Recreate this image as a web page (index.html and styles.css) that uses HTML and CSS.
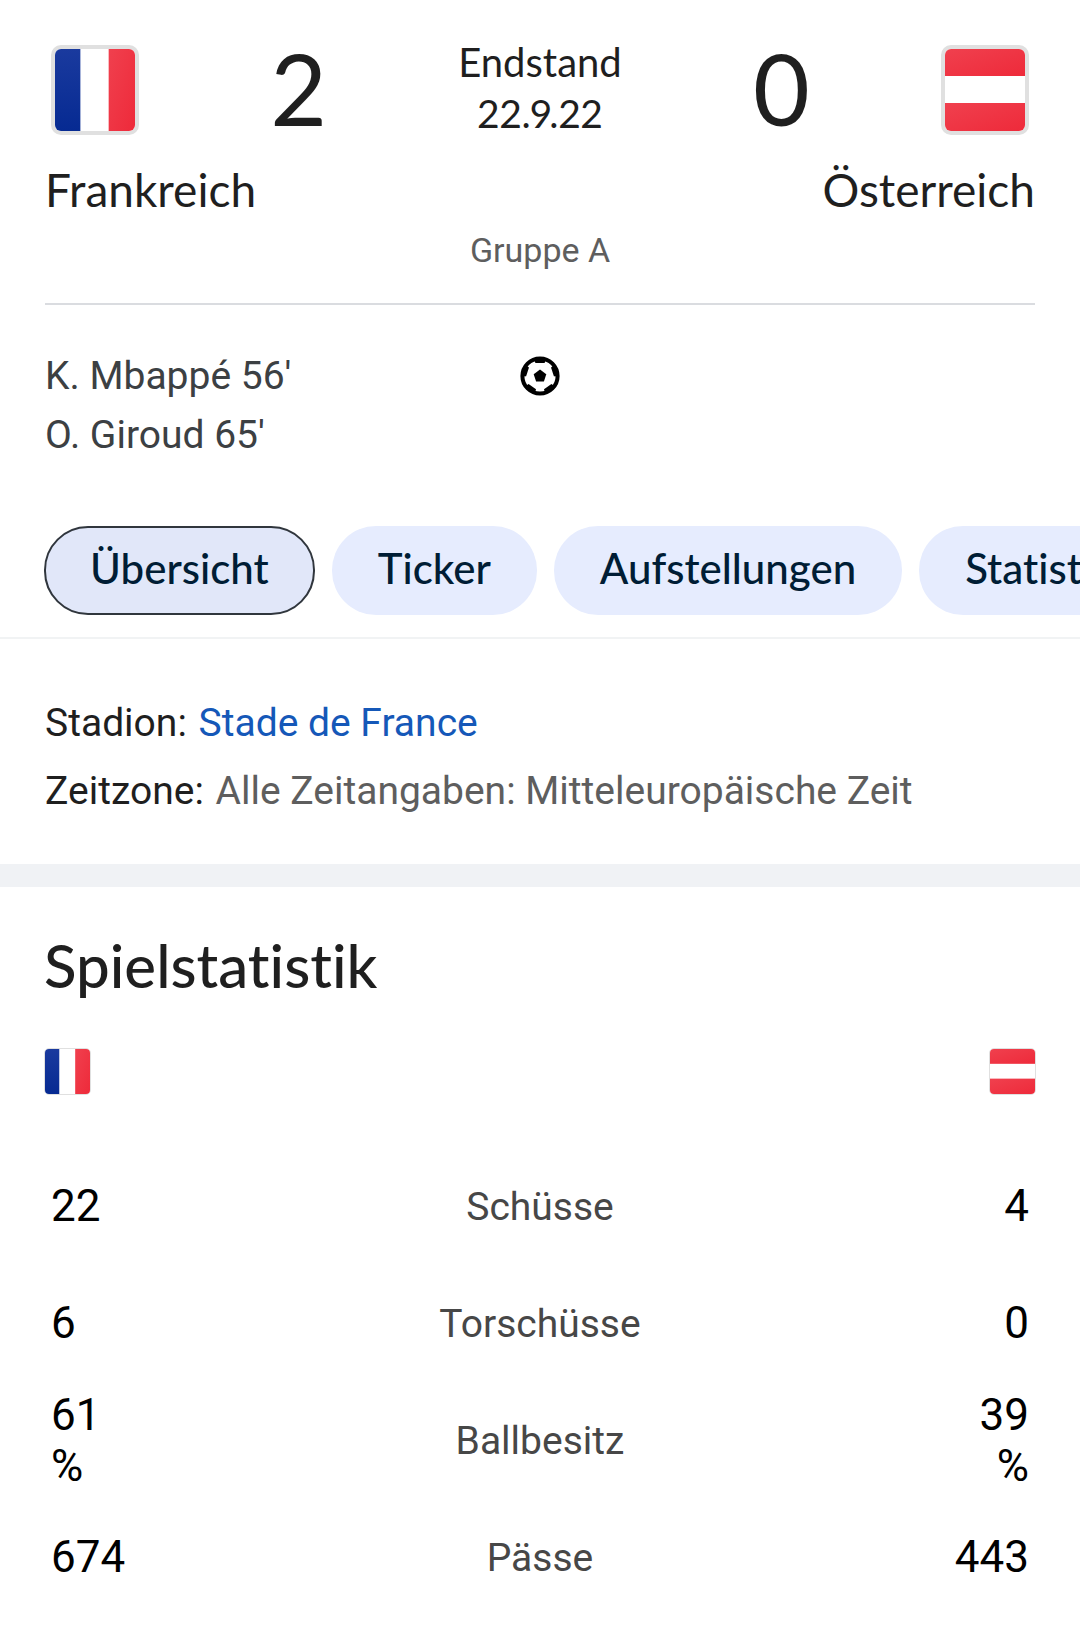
FILE: index.html
```html
<!DOCTYPE html>
<html lang="de">

<head>
    <meta charset="UTF-8">
    <meta name="viewport" content="width=device-width, initial-scale=1.0">
    <title>Frankreich - Österreich</title>
    <link rel="stylesheet" href="styles.css">
</head>

<body>
    <!-- Flaggen -->
    <svg class="sprite" aria-hidden="true">
        <defs>
            <linearGradient id="blue" x1="0" y1="0" x2="0" y2="1">
                <stop offset="0" stop-color="#1a3a9e" />
                <stop offset="1" stop-color="#062a92" />
            </linearGradient>
            <linearGradient id="red" x1="0" y1="0" x2="1" y2="1">
                <stop offset="0" stop-color="#f0404e" />
                <stop offset="1" stop-color="#ee2a3a" />
            </linearGradient>
        </defs>
        <symbol id="flag-fr" viewBox="0 0 82 82" preserveAspectRatio="none">
            <rect width="82" height="82" fill="#fff" />
            <rect width="26" height="82" fill="url(#blue)" />
            <rect x="55" width="27" height="82" fill="url(#red)" />
        </symbol>
        <symbol id="flag-at" viewBox="0 0 82 82" preserveAspectRatio="none">
            <rect width="82" height="82" fill="#fff" />
            <rect width="82" height="27" fill="url(#red)" />
            <rect y="54" width="82" height="28" fill="url(#red)" />
        </symbol>
    </svg>

    <header class="match">
        <div class="scoreboard">
            <svg class="flag" role="img" aria-label="Frankreich"><use href="#flag-fr" /></svg>
            <span class="score">2</span>
            <div class="match-info">
                <div>Endstand</div>
                <div class="date">22.9.22</div>
            </div>
            <span class="score">0</span>
            <svg class="flag" role="img" aria-label="Österreich"><use href="#flag-at" /></svg>
        </div>
        <div class="teams">
            <span>Frankreich</span>
            <span>Österreich</span>
        </div>
        <div class="group">Gruppe A</div>
    </header>

    <section class="goals">
        <div class="scorers">
            <div>K. Mbappé 56'</div>
            <div>O. Giroud 65'</div>
        </div>
        <svg class="ball" viewBox="0 0 40 40" role="img" aria-label="Tore">
            <circle cx="20" cy="20" r="17.6" fill="#fff" stroke="#000" stroke-width="4" />
            <path id="patch" d="M14 3h12l-1.4 3.9h-9.2z" />
            <use href="#patch" transform="rotate(72 20 20)" />
            <use href="#patch" transform="rotate(144 20 20)" />
            <use href="#patch" transform="rotate(216 20 20)" />
            <use href="#patch" transform="rotate(288 20 20)" />
            <path d="M20 13.6l6.3 4.6-2.4 7.4h-7.8l-2.4-7.4z" />
        </svg>
        <div></div>
    </section>

    <nav class="tabs">
        <button class="tab active">Übersicht</button>
        <button class="tab">Ticker</button>
        <button class="tab">Aufstellungen</button>
        <button class="tab">Statistiken</button>
    </nav>

    <section class="details">
        <div><span class="label">Stadion:</span> <a href="#">Stade de France</a></div>
        <div><span class="label">Zeitzone:</span> Alle Zeitangaben: Mitteleuropäische Zeit</div>
    </section>

    <section class="stats">
        <h2>Spielstatistik</h2>
        <div class="stats-flags">
            <svg class="flag small" role="img" aria-label="Frankreich"><use href="#flag-fr" /></svg>
            <svg class="flag small" role="img" aria-label="Österreich"><use href="#flag-at" /></svg>
        </div>
        <table>
            <tr>
                <td>22</td>
                <th scope="row">Schüsse</th>
                <td>4</td>
            </tr>
            <tr>
                <td>6</td>
                <th scope="row">Torschüsse</th>
                <td>0</td>
            </tr>
            <tr>
                <td>61<br>%</td>
                <th scope="row">Ballbesitz</th>
                <td>39<br>%</td>
            </tr>
            <tr>
                <td>674</td>
                <th scope="row">Pässe</th>
                <td>443</td>
            </tr>
        </table>
    </section>
</body>

</html>
```

FILE: styles.css
```css
* {
    box-sizing: border-box;
}

body {
    font-family: Roboto, sans-serif;
    font-size: 39px;
    font-variant-ligatures: none;
    color: #1f1f1f;
    background-color: #fff;
    margin: 0;
    overflow-x: hidden;
}

.sprite {
    position: absolute;
    width: 0;
    height: 0;
}

/* Spielstand */
.match {
    margin: 0 45px;
    padding-top: 34px;
    border-bottom: 2px solid #dadce0;
    font-family: Lato, sans-serif;
}

.scoreboard {
    display: grid;
    grid-template-columns: 88px 1fr auto 1fr 88px;
    align-items: center;
    padding: 0 6px;
}

.flag {
    display: block;
    width: 88px;
    height: 90px;
    border: 4px solid #e0e0e0;
    border-radius: 10px;
}

.score {
    font-size: 98px;
    line-height: 108px;
    padding-bottom: 4px;
    text-align: center;
}

.match-info {
    font-size: 40px;
    line-height: 51px;
    padding-bottom: 4px;
    text-align: center;
}

.date {
    font-size: 39px;
    font-variant-numeric: proportional-nums;
}

.teams {
    display: flex;
    justify-content: space-between;
    font-size: 46px;
    line-height: 56px;
    margin-top: 16px;
}

.group {
    font-family: Roboto, sans-serif;
    font-size: 34px;
    line-height: 40px;
    color: #5e5e5e;
    text-align: center;
    padding: 12px 0 33px;
}

/* Torschützen */
.goals {
    display: grid;
    grid-template-columns: 1fr 40px 1fr;
    margin: 42px 45px 0;
    line-height: 59px;
    color: #3c4043;
}

.ball {
    width: 40px;
    height: 40px;
    margin-top: 9px;
}

.tabs {
    display: flex;
    gap: 17px;
    margin-top: 61px;
    padding: 0 0 22px 44px;
    border-bottom: 2px solid #f1f3f4;
    overflow: hidden;
}

.tab {
    flex: none;
    height: 89px;
    padding: 0 46px 5px;
    border: none;
    border-radius: 44px;
    background-color: #e6ecfe;
    color: #001d35;
    font-family: Lato, sans-serif;
    font-size: 42px;
    font-variant-ligatures: none;
    font-weight: 500;
    cursor: pointer;
}

.tab.active {
    background-color: #e1e7f9;
    border: 2px solid #30363d;
    padding: 0 44px 5px;
}

/* Stadion und Zeitzone */
.details {
    padding: 50px 45px 39px;
    line-height: 68px;
    color: #5e5e5e;
    border-bottom: 23px solid #f0f2f5;
}

.details .label {
    color: #1f1f1f;
    margin-right: 2px;
}

.details a {
    color: #1558b8;
    text-decoration: none;
}

/* Statistik */
.stats {
    padding: 42px 44px 20px;
}

h2 {
    margin: 0;
    font-family: Lato, sans-serif;
    font-size: 60px;
    font-weight: 500;
    line-height: 72px;
}

.stats-flags {
    display: flex;
    justify-content: space-between;
    margin: 47px 0 53px;
}

.flag.small {
    width: 47px;
    height: 47px;
    border-width: 1px;
    border-radius: 5px;
}

table {
    width: 100%;
    border-collapse: collapse;
    table-layout: fixed;
}

td,
th {
    height: 117px;
    padding: 7px;
}

td {
    color: #000;
    font-size: 44px;
    line-height: 51px;
}

td:last-child {
    text-align: right;
}

th {
    font-weight: 400;
    color: #474747;
}
```
